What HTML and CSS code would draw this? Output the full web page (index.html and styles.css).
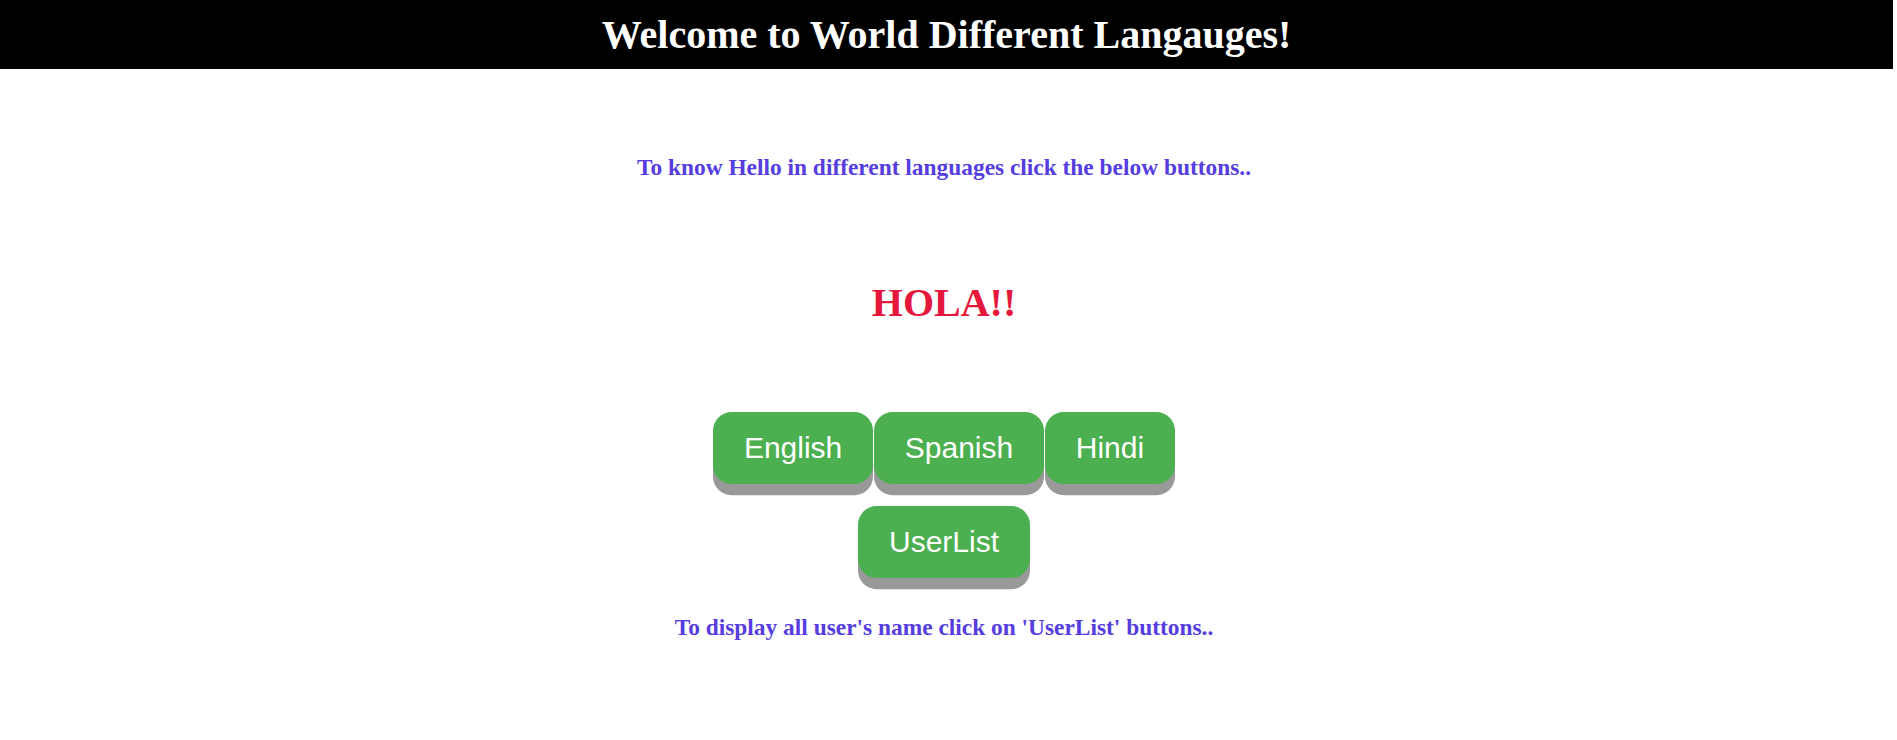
FILE: index.html
```html
<!DOCTYPE html>
<html lang="en">
<head>
<meta charset="utf-8">
<title>World Different Languages</title>
<link rel="stylesheet" href="styles.css">
</head>
<body>
<header class="topbar">
  <h1 class="topbar-title">Welcome to World Different Langauges!</h1>
</header>
<main class="content">
  <h3 class="hint hint-top">To know Hello in different languages click the below buttons..</h3>
  <h1 class="greeting">HOLA!!</h1>
  <div class="btn-row">
    <button class="btn">English</button>
    <button class="btn">Spanish</button>
    <button class="btn">Hindi</button>
  </div>
  <div class="btn-row btn-row-second">
    <button class="btn">UserList</button>
  </div>
  <h3 class="hint hint-bottom">To display all user's name click on 'UserList' buttons..</h3>
</main>
</body>
</html>
```
FILE: styles.css
```css
html, body {
  margin: 0;
  padding: 0;
  background: #ffffff;
}
body {
  font-family: "Liberation Serif", "Times New Roman", serif;
}
.topbar {
  width: 1893px;
  height: 69px;
  background: #000000;
  display: flex;
  align-items: center;
  justify-content: center;
}
.topbar-title {
  margin: 0;
  width: 1888px;
  text-align: center;
  color: #ffffff;
  font-size: 40px;
  font-weight: bold;
  line-height: 44px;
}
.content {
  width: 1888px;
  display: flex;
  flex-direction: column;
  align-items: center;
}
.hint {
  margin: 0;
  color: #553ddf;
  font-size: 23.4px;
  font-weight: bold;
  line-height: 27px;
}
.hint-top {
  margin-top: 85px;
}
.greeting {
  margin: 99px 0 0;
  color: #e5173c;
  font-size: 40px;
  font-weight: bold;
  line-height: 46px;
}
.btn-row {
  display: flex;
  gap: 1px;
  margin-top: 86px;
}
.btn-row-second {
  margin-top: 22px;
}
.btn {
  font-family: "Liberation Sans", Arial, sans-serif;
  font-size: 30px;
  line-height: 34.5px;
  padding: 18.75px 30.75px;
  color: #ffffff;
  background: #4caf50;
  border: none;
  border-radius: 18.75px;
  box-shadow: 0 11.25px #999999;
  cursor: pointer;
}
.hint-bottom {
  margin-top: 36px;
}
```
